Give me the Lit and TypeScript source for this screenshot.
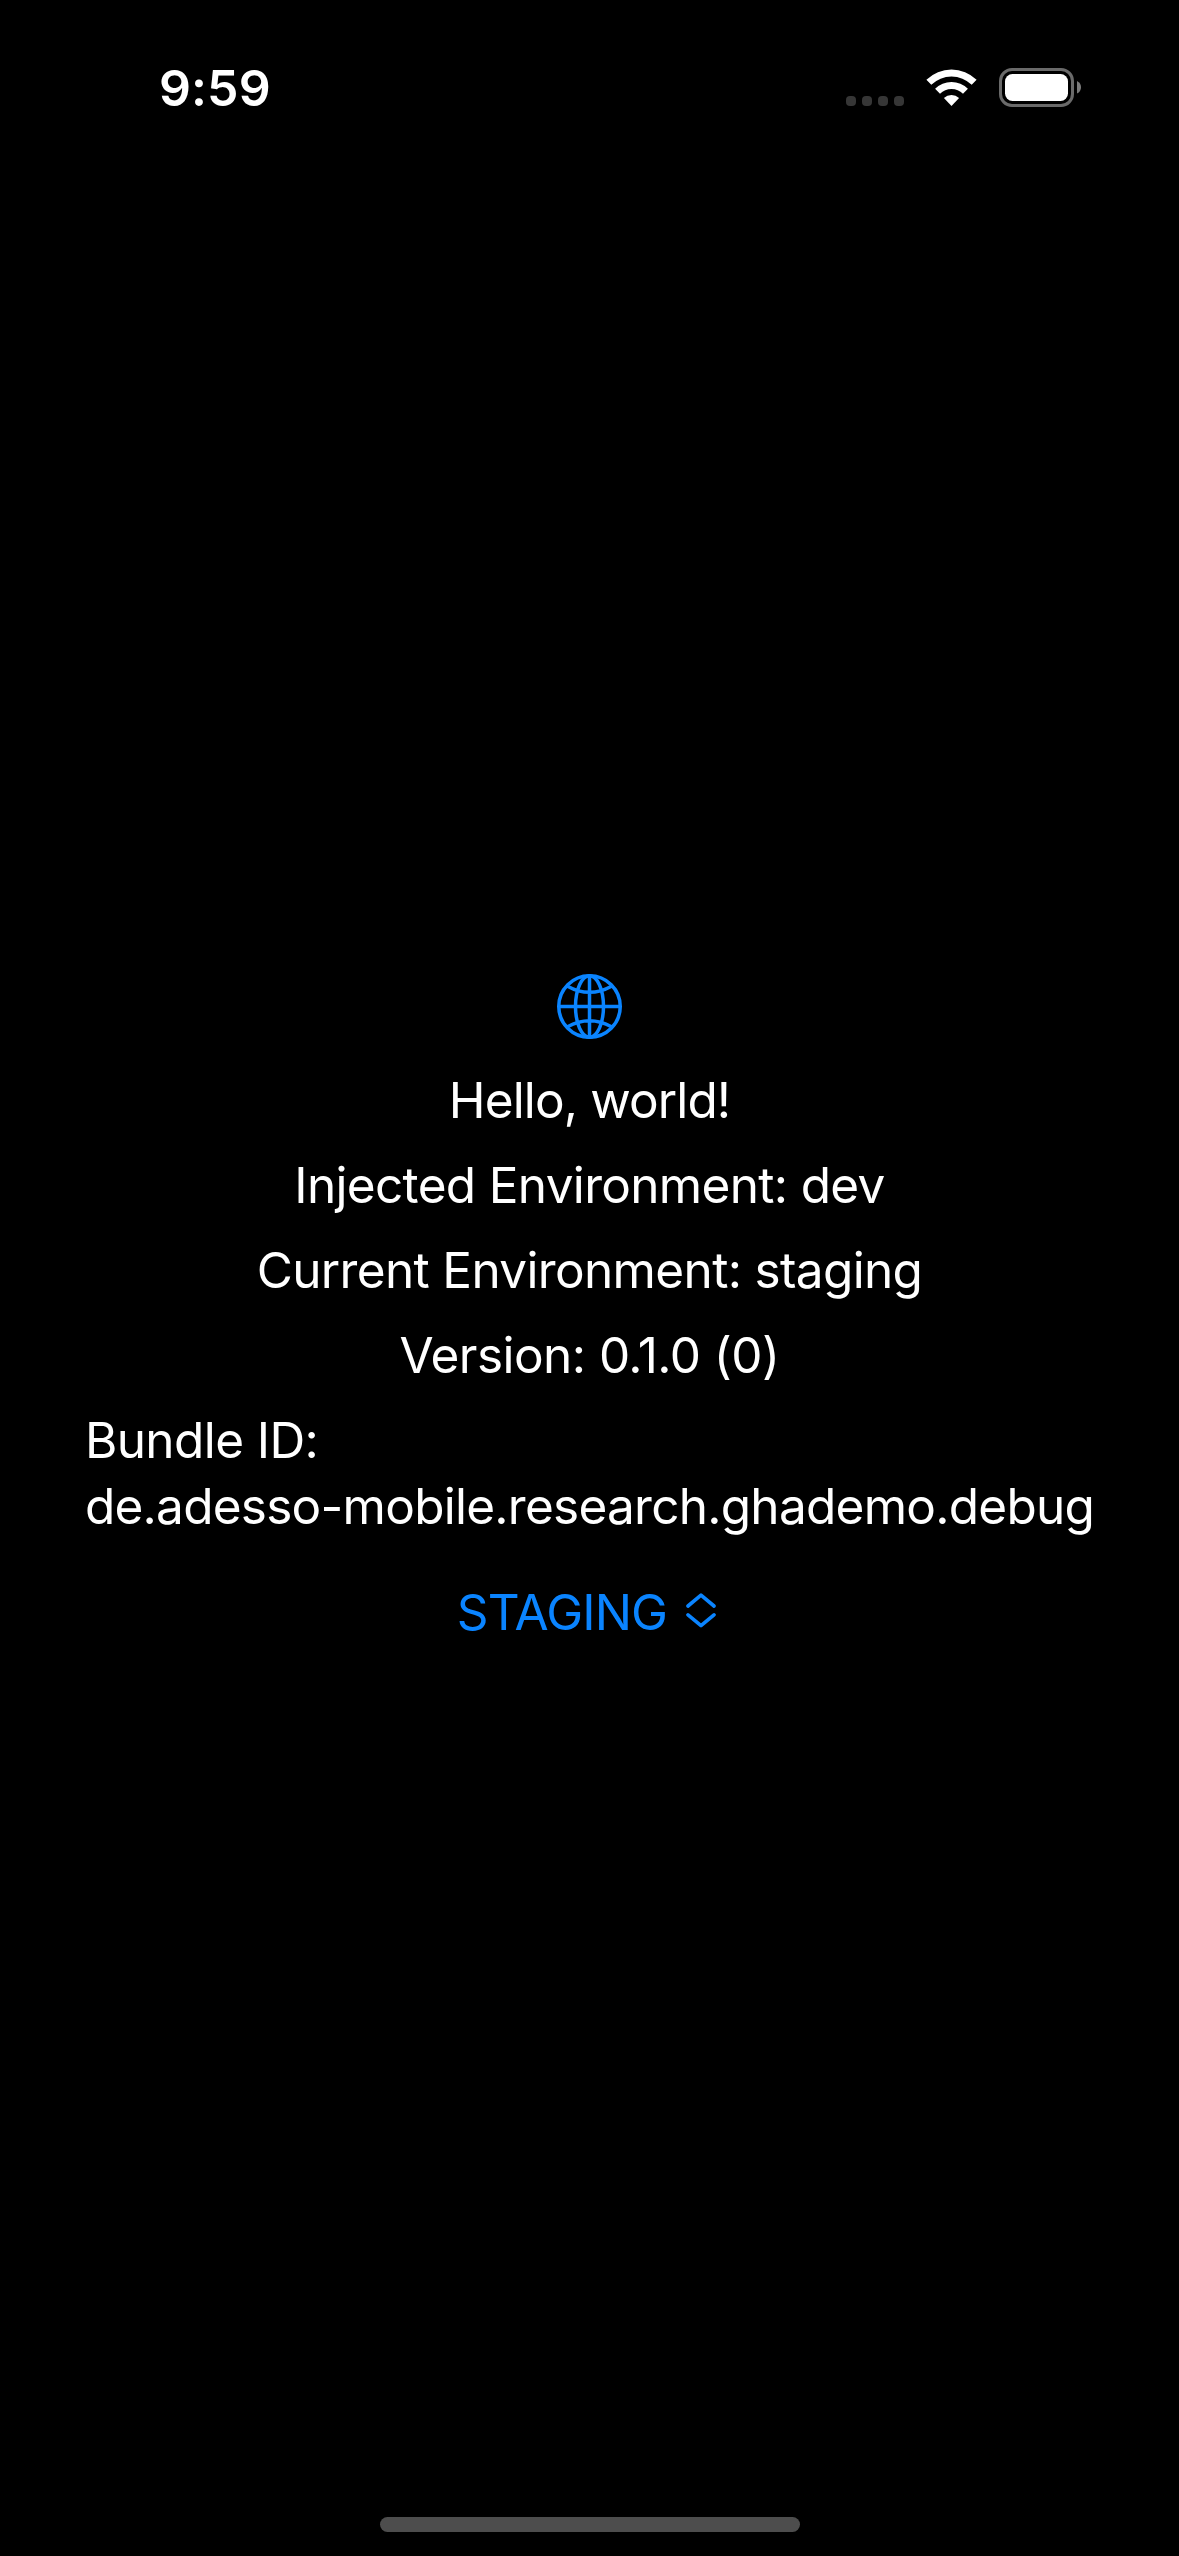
import { LitElement, html, css } from "lit";
import { customElement } from "lit/decorators.js";

@customElement("status-bar")
class StatusBar extends LitElement {
  static styles = css`
    :host {
      display: flex;
      justify-content: space-between;
      align-items: flex-start;
      box-sizing: border-box;
      height: 177px;
      padding: 58px 98px 0 159px;
      font-family: Inter, "Liberation Sans", sans-serif;
      color: #fff;
    }
    .time {
      font-size: 50px;
      line-height: 60px;
      font-weight: 600;
      letter-spacing: 0.1px;
    }
    .icons {
      display: flex;
      align-items: flex-start;
      padding-top: 10px;
    }
    .dots {
      display: flex;
      gap: 6px;
      padding-top: 28px;
      margin-right: 22px;
    }
    .dot {
      width: 10px;
      height: 10px;
      border-radius: 4px;
      background: #363636;
    }
    .wifi {
      display: block;
      margin: 1px 22px 0 0;
    }
    .battery {
      display: block;
    }
  `;

  render() {
    return html`
      <span class="time">9:59</span>
      <div class="icons">
        <div class="dots">
          <span class="dot"></span><span class="dot"></span><span class="dot"></span><span class="dot"></span>
        </div>
        <svg class="wifi" width="51" height="38" viewBox="0 0 51 38" fill="#fff">
          <path d="M0.4 10.8A36 36 0 0 1 50.6 10.8L45.7 15.8A29 29 0 0 0 5.3 15.8Z" />
          <path d="M9.1 19.8A23.4 23.4 0 0 1 41.9 19.8L37 24.8A16.4 16.4 0 0 0 14 24.8Z" />
          <path d="M17.9 29A11.4 11.4 0 0 1 33.1 29L25.5 37Z" />
        </svg>
        <svg class="battery" width="82" height="39" viewBox="0 0 82 39">
          <rect x="1.5" y="1.5" width="72" height="36" rx="11.5" fill="none" stroke="#6a6a6a" stroke-width="3" />
          <rect x="6" y="6" width="63" height="27" rx="7.5" fill="#fff" />
          <path d="M78 13Q82 15 82 19.3T78 25.6Z" fill="#7a7a7a" />
        </svg>
      </div>
    `;
  }
}

@customElement("app-root")
class AppRoot extends LitElement {
  static styles = css`
    :host {
      display: flex;
      flex-direction: column;
      width: 1179px;
      height: 2556px;
      background: #000;
      color: #fff;
      font-family: Inter, "Liberation Sans", sans-serif;
      font-size: 49.5px;
      line-height: 60px;
      overflow: hidden;
    }
    .content {
      flex: 1;
      display: flex;
      flex-direction: column;
      align-items: center;
      padding-top: 797px;
    }
    .globe {
      display: block;
      margin-bottom: 31px;
    }
    .line {
      white-space: nowrap;
      margin-bottom: 25px;
    }
    .hello {
      letter-spacing: -0.87px;
    }
    .injected {
      letter-spacing: -0.67px;
    }
    .current {
      letter-spacing: -0.65px;
    }
    .version {
      letter-spacing: -0.55px;
    }
    .bundle {
      line-height: 66px;
      margin-top: -3px;
      letter-spacing: -0.74px;
    }
    .label {
      letter-spacing: -0.59px;
    }
    .picker {
      display: flex;
      align-items: center;
      gap: 19px;
      color: #0a84ff;
      margin: 18px 6px 0 0;
    }
    .choice {
      letter-spacing: -0.87px;
    }
    .chevrons {
      display: block;
      margin-bottom: 3px;
    }
    .home {
      align-self: center;
      width: 420px;
      height: 15px;
      border-radius: 7.5px;
      background: #4d4d4d;
      margin-bottom: 24px;
    }
  `;

  render() {
    return html`
      <status-bar></status-bar>
      <main class="content">
        <svg class="globe" width="65" height="65" viewBox="0 0 65 65" fill="none" stroke="#0a84ff" stroke-width="3.5">
          <circle cx="32.5" cy="32.5" r="30.75" />
          <ellipse cx="32.5" cy="32.5" rx="14" ry="30.75" />
          <path d="M32.5 1V64M1 32.5H64M10.5 12.2Q32.5 24.4 54.5 12.2M10.5 52.8Q32.5 40.6 54.5 52.8" />
        </svg>
        <div class="line hello">Hello, world!</div>
        <div class="line injected">Injected Environment: dev</div>
        <div class="line current">Current Environment: staging</div>
        <div class="line version">Version: 0.1.0 (0)</div>
        <div class="line bundle"><span class="label">Bundle ID:</span><br />de.adesso-mobile.research.ghademo.debug</div>
        <div class="picker">
          <span class="choice">STAGING</span>
          <svg class="chevrons" width="30" height="35" viewBox="0 0 30 35" fill="none" stroke="#0a84ff" stroke-width="3.6" stroke-linecap="round" stroke-linejoin="round">
            <path d="M2 13L15 2.2L28 13M2 21.8L15 32.6L28 21.8" />
          </svg>
        </div>
      </main>
      <div class="home"></div>
    `;
  }
}
